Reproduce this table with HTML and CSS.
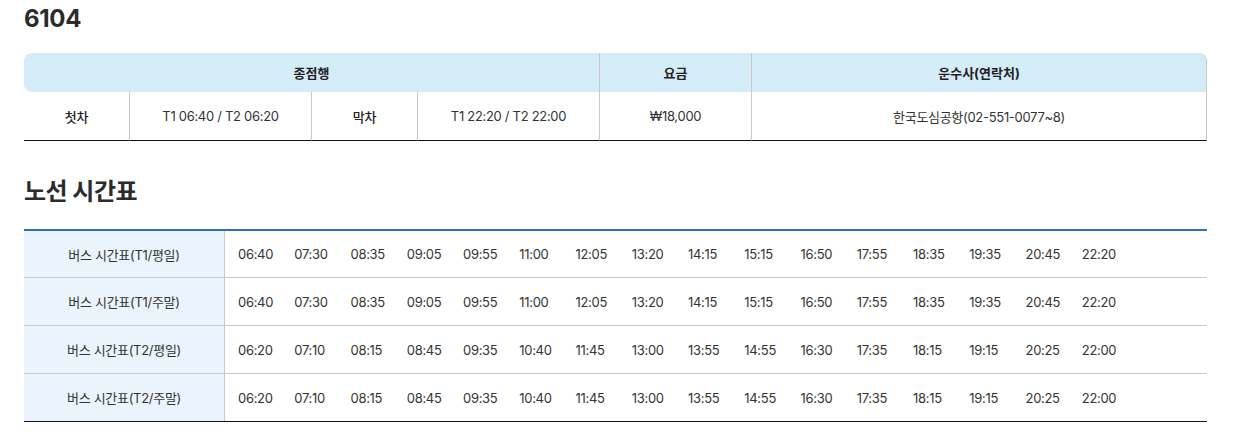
FILE: index.html
```html
<!DOCTYPE html>
<html lang="ko">
<head>
<meta charset="utf-8">
<link rel="stylesheet" href="styles.css">
</head>
<body>
<div class="page">
  <h1 class="route-no">6104</h1>
  <table class="info">
    <colgroup>
      <col class="c1"><col class="c2"><col class="c3"><col class="c4"><col class="c5"><col class="c6">
    </colgroup>
    <thead>
      <tr>
        <th colspan="4" class="th-first">종점행</th>
        <th>요금</th>
        <th class="th-last">운수사(연락처)</th>
      </tr>
    </thead>
    <tbody>
      <tr>
        <td class="label">첫차</td>
        <td>T1 06:40 / T2 06:20</td>
        <td class="label">막차</td>
        <td>T1 22:20 / T2 22:00</td>
        <td>₩18,000</td>
        <td class="td-last">한국도심공항(02-551-0077~8)</td>
      </tr>
    </tbody>
  </table>

  <h2 class="section-title">노선 시간표</h2>
  <table class="timetable">
    <tbody>
      <tr>
        <th>버스 시간표(T1/평일)</th>
        <td><div class="times"><span>06:40</span><span>07:30</span><span>08:35</span><span>09:05</span><span>09:55</span><span>11:00</span><span>12:05</span><span>13:20</span><span>14:15</span><span>15:15</span><span>16:50</span><span>17:55</span><span>18:35</span><span>19:35</span><span>20:45</span><span>22:20</span></div></td>
      </tr>
      <tr>
        <th>버스 시간표(T1/주말)</th>
        <td><div class="times"><span>06:40</span><span>07:30</span><span>08:35</span><span>09:05</span><span>09:55</span><span>11:00</span><span>12:05</span><span>13:20</span><span>14:15</span><span>15:15</span><span>16:50</span><span>17:55</span><span>18:35</span><span>19:35</span><span>20:45</span><span>22:20</span></div></td>
      </tr>
      <tr>
        <th>버스 시간표(T2/평일)</th>
        <td><div class="times"><span>06:20</span><span>07:10</span><span>08:15</span><span>08:45</span><span>09:35</span><span>10:40</span><span>11:45</span><span>13:00</span><span>13:55</span><span>14:55</span><span>16:30</span><span>17:35</span><span>18:15</span><span>19:15</span><span>20:25</span><span>22:00</span></div></td>
      </tr>
      <tr>
        <th>버스 시간표(T2/주말)</th>
        <td><div class="times"><span>06:20</span><span>07:10</span><span>08:15</span><span>08:45</span><span>09:35</span><span>10:40</span><span>11:45</span><span>13:00</span><span>13:55</span><span>14:55</span><span>16:30</span><span>17:35</span><span>18:15</span><span>19:15</span><span>20:25</span><span>22:00</span></div></td>
      </tr>
    </tbody>
  </table>
</div>
</body>
</html>
```

FILE: styles.css
```css
* { box-sizing: border-box; }
html, body { margin: 0; padding: 0; background: #fff; }
body {
  font-family: "Inter", "Noto Sans CJK KR", sans-serif;
  color: #333;
  font-size: 14px;
}
.page {
  padding: 4px 35px 0 24px;
  width: 1242px;
}
.route-no {
  margin: 0;
  font-size: 24px;
  font-weight: 700;
  line-height: 30px;
  color: #2b2b2b;
  letter-spacing: -0.3px;
}
table {
  width: 100%;
  border-collapse: separate;
  border-spacing: 0;
  table-layout: fixed;
}
.info { margin-top: 19px; }
.info .c1 { width: 105px; }
.info .c2 { width: 182px; }
.info .c3 { width: 106px; }
.info .c4 { width: 182px; }
.info .c5 { width: 152px; }
.info .c6 { width: auto; }
.info th {
  background: #d4ebf8;
  height: 39px;
  font-weight: 700;
  font-size: 13px;
  color: #222;
  border-left: 1px solid #c9c9c9;
  padding: 0;
}
.info th.th-first { border-left: none; border-radius: 8px 0 0 8px; }
.info th.th-last { border-radius: 0 8px 0 0; border-right: 1px solid #c9c9c9; }
.info td {
  height: 49px;
  text-align: center;
  border-left: 1px solid #c9c9c9;
  border-bottom: 1px solid #111;
  padding: 0;
  font-size: 13px;
  color: #333;
  letter-spacing: -0.3px;
}
.info td.label { font-weight: 500; color: #222; }
.info td:first-child { border-left: none; }
.info td.td-last { border-right: 1px solid #c9c9c9; }
.section-title {
  margin: 36px 0 0;
  font-size: 24px;
  font-weight: 700;
  line-height: 30px;
  color: #2b2b2b;
  letter-spacing: -0.5px;
}
.timetable {
  margin-top: 22px;
  border-top: 2px solid #2f6fbf;
  border-bottom: 1px solid #111;
}
.timetable th {
  width: 201px;
  background: #ebf3fd;
  font-weight: 400;
  font-size: 13px;
  color: #333;
  height: 48px;
  border-right: 1px solid #c9c9c9;
  border-bottom: 1px solid #c9c9c9;
  padding: 0;
  letter-spacing: -0.3px;
}
.timetable td {
  padding: 0 0 0 13px;
  border-bottom: 1px solid #c9c9c9;
  height: 48px;
}
.timetable tr:last-child th,
.timetable tr:last-child td { border-bottom: none; height: 47px; }
.timetable tr:first-child th,
.timetable tr:first-child td { height: 47px; }
.times {
  display: grid;
  grid-template-columns: repeat(16, 56.25px);
  font-size: 13px;
  color: #333;
  letter-spacing: -0.3px;
}
```
